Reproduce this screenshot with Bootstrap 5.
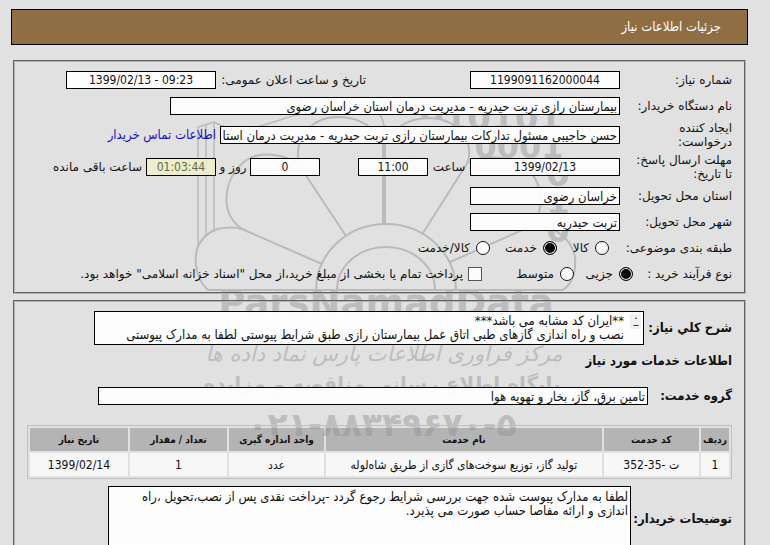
<!DOCTYPE html>
<html lang="fa" dir="rtl">
<head>
<meta charset="utf-8">
<meta name="viewport" content="width=device-width, initial-scale=1">
<title>جزئیات اطلاعات نیاز</title>
<link rel="stylesheet" href="https://cdn.jsdelivr.net/npm/bootstrap@5.3.0/dist/css/bootstrap.min.css">
<style>
body{background:#e1e1e1;color:#111;font-family:"DejaVu Sans","DejaVu Sans Condensed",sans-serif;font-size:12px;line-height:14px;padding:9px 22px 0 11px;overflow-x:hidden}
body::-webkit-scrollbar,textarea::-webkit-scrollbar{display:none}
.title-bar,.field,.contact,.services,.panel-b{font-family:"DejaVu Sans Condensed","DejaVu Sans",sans-serif}
.title-bar{background:#906e43;border:1px solid #000;color:#fff;height:36px;padding:0 26px}
.title-bar h1{font-size:13px;line-height:14px}
.panel{border:2px groove #b4b4b4;margin:0 2px}
.panel-a{margin-top:15px;padding:5px 12px}
.panel-b{margin-top:6px;padding:9px 12px 20px}
.line{min-height:26px}
.line-tall{min-height:32px}
.cap{flex:none;width:112px}
.cap-topic{width:123px}
.cap-process{width:99px}
.cap-public{width:254px;padding-right:104px}
.panel-b .cap{font-size:13px;font-weight:bold}
.field{background:rgba(255,255,255,.93);border:1px solid #000;border-radius:0;color:#111;outline:0;padding:0 2px;min-width:0;font-size:13px}
input.field{height:18px;line-height:16px}
.num{text-align:center;font-size:12px}
.w-mid{width:150px}
.w-long{width:450px}
.w-name{width:400px}
.w-tiny{width:70px}
.w-hour{width:42px}
.w-day{width:34px}
.days{margin-right:38px}
.left-time{background:rgba(240,240,200,.9);color:#666650}
.contact{color:#1a10c4;font-size:13px}
.opt{flex:none;gap:6px}
.opt-sm{width:52px}
.opt-md{width:67px}
.opt-pr{width:59px}
.opt-lg{width:92px}
.opt input{appearance:none;flex:none;width:14px;height:14px;margin:0;border:1px solid #111;border-radius:50%;background:rgba(255,255,255,.9)}
.opt input:checked{background:#000;box-shadow:inset 0 0 0 1px #fff}
.opt input[type=checkbox]{border-radius:0;border-color:#555}
.opt-check{gap:5px}
textarea.field{display:block;resize:none;line-height:14px;overflow:hidden}
.desc{width:550px;flex:0 1 550px}
.desc textarea{height:34px;width:100%;padding:2px 19px 0 2px}
.spin{top:3px;right:3px}
.cap-desc{width:88px!important}
.cap-group{width:84px!important}
.cap-notes{width:101px!important}
.sub{font-size:13px;line-height:16px;margin:8px 0 18px}
.services{border:1px solid #c0c0c0;border-collapse:separate;border-spacing:2px;table-layout:fixed;margin:20px 0 7px;width:100%}
.services th,.services td{padding:0;text-align:center;vertical-align:middle;height:23px;white-space:nowrap}
.services th{background:rgba(144,144,144,.55);font-size:10px}
.services td{background:#f7f7f7;font-size:12px}
.notes{height:66px;width:523px;padding:3px 2px}
.watermark{top:0;left:0;width:770px;height:545px;z-index:-1;pointer-events:none}
.watermark text{font-family:"DejaVu Sans",sans-serif;font-weight:bold;fill:#bdbdbd;text-anchor:middle}
</style>
<script src="https://cdn.jsdelivr.net/npm/bootstrap@5.3.0/dist/js/bootstrap.bundle.min.js"></script>
</head>
<body class="position-relative">
<svg class="watermark position-absolute" viewBox="0 0 770 545" aria-hidden="true">
  <g direction="ltr">
    <text x="491" y="130" font-size="34">010101</text>
    <text x="519" y="158" font-size="32">0001</text>
    <text x="386" y="316" font-size="37">ParsNamadData</text>
  </g>
  <path d="M384 145Q398 119 427 118C456 118 474 138 468 162C486 154 514 156 529 170C545 188 545 215 527 228C550 222 571 236 575 257Q577 280 563 290H384Z" fill="#e1e1e1"/>
  <g font-size="34" direction="ltr">
    <text x="558" y="186">0</text>
    <text x="558" y="214">1</text>
    <text x="558" y="242">0</text>
  </g>
  <g fill="none" stroke="#bababa" stroke-width="2">
    <path d="M208 290H563M316 290A70 66 0 0 1 456 290M337 290A49 43 0 0 1 435 290"/>
    <path d="M322 264L242 229Q233 226 217 229Q193 239 196 265Q197 280 208 290"/>
    <path d="M346 236L299 165C286 154 260 150 245 161C224 178 218 212 242 229"/>
    <path d="M299 165C293 135 314 116 340 117Q370 118 384 145Q398 119 427 118C456 118 474 138 468 162"/>
    <path d="M423 233L468 162C486 154 514 156 529 170C545 188 545 215 527 228"/>
    <path d="M450 262L527 228C550 222 571 236 575 257Q577 280 563 290"/>
    <path d="M384 125V225" stroke-width="4"/>
    <path d="M198 246V127L214 122V232M206 236V125M214 122Q234 134 260 126C300 114 325 105 347 104Q383 104 384 127" stroke-width="1.5"/>
  </g>
  <g direction="rtl">
    <text x="384" y="361" font-size="21" font-style="italic" style="font-weight:normal">مرکز فرآوری اطلاعات پارس نماد داده ها</text>
    <text x="382" y="391" font-size="20">پایگاه اطلاع رسانی مناقصه و مزایده</text>
  </g>
  <text x="382" y="436" font-size="33" direction="ltr">۰۲۱-۸۸۳۴۹۶۷۰-۵</text>
</svg>

<header class="title-bar d-flex align-items-center"><h1 class="m-0 fw-normal">جزئیات اطلاعات نیاز</h1></header>

<section class="panel panel-a">
  <div class="line d-flex align-items-center">
    <label class="cap" for="no">شماره نیاز:</label>
    <input id="no" class="field num w-mid" value="1199091162000044" readonly>
    <label class="cap cap-public text-nowrap" for="pub">تاریخ و ساعت اعلان عمومی:</label>
    <input id="pub" class="field num w-mid" dir="ltr" value="1399/02/13 - 09:23" readonly>
  </div>
  <div class="line d-flex align-items-center">
    <label class="cap" for="org">نام دستگاه خریدار:</label>
    <input id="org" class="field w-long" value="بیمارستان رازی تربت حیدریه - مدیریت درمان استان خراسان رضوی" readonly>
  </div>
  <div class="line line-tall d-flex align-items-center">
    <label class="cap" for="creator">ایجاد کننده<br>درخواست:</label>
    <input id="creator" class="field w-name" value="حسن حاجیبی مسئول تدارکات بیمارستان رازی تربت حیدریه - مدیریت درمان استان خراسان رضوی" readonly>
    <a class="contact text-decoration-none text-nowrap pe-1" href="#">اطلاعات تماس خریدار</a>
  </div>
  <div class="line line-tall d-flex align-items-center">
    <label class="cap" for="due">مهلت ارسال پاسخ:<br>تا تاریخ:</label>
    <input id="due" class="field num w-mid" value="1399/02/13" readonly>
    <label class="w-hour text-center" for="hour">ساعت</label>
    <input id="hour" class="field num w-tiny" value="11:00" readonly>
    <input id="days" class="field num w-tiny days" value="0" readonly>
    <label class="w-day text-center text-nowrap" for="days">روز و</label>
    <input id="left" class="field num w-tiny left-time" value="01:03:44" readonly>
    <label class="text-nowrap pe-1" for="left">ساعت باقی مانده</label>
  </div>
  <div class="line d-flex align-items-center">
    <label class="cap" for="prov">استان محل تحویل:</label>
    <input id="prov" class="field w-mid" value="خراسان رضوی" readonly>
  </div>
  <div class="line d-flex align-items-center">
    <label class="cap" for="city">شهر محل تحویل:</label>
    <input id="city" class="field w-mid" value="تربت حیدریه" readonly>
  </div>
  <div class="line d-flex align-items-center" role="radiogroup" aria-label="طبقه بندی موضوعی">
    <span class="cap cap-topic">طبقه بندی موضوعی:</span>
    <label class="opt opt-sm d-flex align-items-center"><input type="radio" name="topic">کالا</label>
    <label class="opt opt-md d-flex align-items-center"><input type="radio" name="topic" checked>خدمت</label>
    <label class="opt d-flex align-items-center"><input type="radio" name="topic">کالا/خدمت</label>
  </div>
  <div class="line d-flex align-items-center" role="radiogroup" aria-label="نوع فرآیند خرید">
    <span class="cap cap-process">نوع فرآیند خرید :</span>
    <label class="opt opt-pr d-flex align-items-center"><input type="radio" name="proc" checked>جزیی</label>
    <label class="opt opt-lg d-flex align-items-center"><input type="radio" name="proc">متوسط</label>
    <label class="opt opt-check d-flex align-items-center"><input type="checkbox">پرداخت تمام یا بخشی از مبلغ خرید،از محل "اسناد خزانه اسلامی" خواهد بود.</label>
  </div>
</section>

<section class="panel panel-b">
  <div class="d-flex align-items-center">
    <label class="cap cap-desc" for="desc">شرح کلي نیاز:</label>
    <div class="desc position-relative">
      <textarea id="desc" class="field" readonly>**ایران کد مشابه می باشد***
نصب و راه اندازی گازهای طبی اتاق عمل بیمارستان رازی طبق شرایط پیوستی لطفا به مدارک پیوستی</textarea>
      <svg class="spin position-absolute" width="11" height="15" viewBox="0 0 11 15" aria-hidden="true"><path d="M0 0H11V15H0Z" fill="#f0f0f0"/><path d="M5 5L6 3L7 5ZM3 11H9L8 12H4Z" fill="#333"/></svg>
    </div>
  </div>
  <h2 class="sub fw-bold">اطلاعات خدمات مورد نیاز</h2>
  <div class="d-flex align-items-center">
    <label class="cap cap-group" for="group">گروه خدمت:</label>
    <input id="group" class="field desc" value="تامین برق، گاز، بخار و تهویه هوا" readonly>
  </div>
  <table class="services">
    <colgroup><col style="width:4.1%"><col style="width:13.8%"><col style="width:40%"><col style="width:13.8%"><col style="width:14.1%"><col style="width:14.2%"></colgroup>
    <thead><tr><th>ردیف</th><th>کد خدمت</th><th>نام خدمت</th><th>واحد اندازه گیری</th><th>تعداد / مقدار</th><th>تاریخ نیاز</th></tr></thead>
    <tbody><tr><td>1</td><td>ت -35-352</td><td>تولید گاز، توزیع سوخت‌های گازی از طریق شاه‌لوله</td><td>عدد</td><td>1</td><td>1399/02/14</td></tr></tbody>
  </table>
  <div class="d-flex align-items-center">
    <label class="cap cap-notes text-nowrap" for="notes">توضیحات خریدار:</label>
    <textarea id="notes" class="field notes" readonly>لطفا به مدارک پیوست شده جهت بررسی شرایط رجوع گردد -پرداخت نقدی پس از نصب،تحویل ،راه
اندازی و ارائه مفاصا حساب صورت می پذیرد.</textarea>
  </div>
</section>
</body>
</html>
